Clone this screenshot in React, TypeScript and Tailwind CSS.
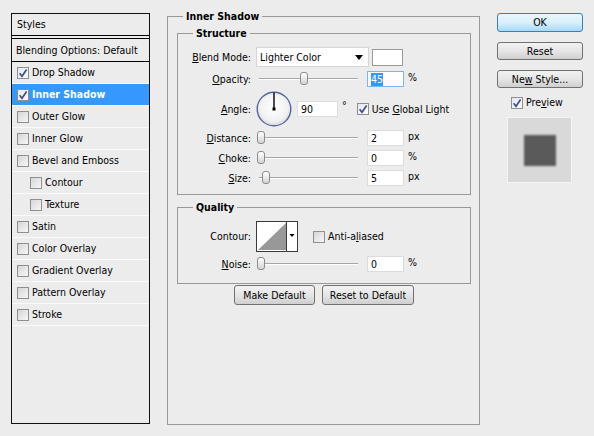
import React from "react";

const ui =
  "font-['DejaVu_Sans_Condensed','DejaVu_Sans',sans-serif] text-[10.5px] leading-[13px] text-black";

function CheckBox({ on }: { on?: boolean }) {
  return (
    <span
      className={`flex h-[12px] w-[12px] shrink-0 items-center justify-center border border-[#8f8f8f] ${
        on ? "bg-gradient-to-br from-[#e4e8f4] to-[#fdfdfd]" : "bg-gradient-to-br from-[#d6d6d6] to-[#f7f7f7]"
      }`}
    >
      {on && (
        <svg width="10" height="10" viewBox="0 0 10 10">
          <path d="M1.6 5.2 L4 8.2 L8.6 1.4" fill="none" stroke="#3f4f91" strokeWidth="1.7" />
        </svg>
      )}
    </span>
  );
}

function Slider({ thumb }: { thumb: string }) {
  return (
    <div className="relative h-[14px] w-[104px] shrink-0">
      <div className="absolute left-[3px] right-[2px] top-[6px] h-[2px] border-t border-[#a6a6a6] bg-white" />
      <span
        className={`absolute top-0 h-[13px] w-[8px] rounded-[3px] border border-[#8b8b8b] bg-gradient-to-b from-white to-[#d4d4d4] ${thumb}`}
      />
    </div>
  );
}

function Field({ value, selected, width = "w-[37px]" }: { value: string; selected?: boolean; width?: string }) {
  return (
    <span
      className={`flex h-[16px] shrink-0 items-center border bg-white pl-[3px] ${width} ${
        selected ? "border-[#7eb4ea]" : "border-[#dcdcdc]"
      }`}
    >
      {selected ? <span className="bg-[#3399ff] text-white">{value}</span> : value}
    </span>
  );
}

function Label({ children }: { children: React.ReactNode }) {
  return <span className="w-[78px] shrink-0 pr-[5px] text-right">{children}</span>;
}

function SliderRow({
  label,
  thumb,
  value,
  unit,
  selected,
  className,
}: {
  label: React.ReactNode;
  thumb: string;
  value: string;
  unit: string;
  selected?: boolean;
  className: string;
}) {
  return (
    <div className={`flex h-[16px] items-center ${className}`}>
      <Label>{label}</Label>
      <Slider thumb={thumb} />
      <span className="ml-[7px]">
        <Field value={value} selected={selected} />
      </span>
      <span className="ml-[4px] -mt-[3px]">{unit}</span>
    </div>
  );
}

function Button({ children, width, primary }: { children: React.ReactNode; width: string; primary?: boolean }) {
  return (
    <div
      className={`flex items-center justify-center rounded-[3px] border ${width} ${
        primary
          ? "border-[#3c7fb1] bg-gradient-to-b from-[#eaf6fd] via-[#d9f0fc] to-[#a7d9f5]"
          : "border-[#707070] bg-gradient-to-b from-[#f2f2f2] via-[#e6e6e6] to-[#cfcfcf]"
      }`}
    >
      {children}
    </div>
  );
}

const styleItems: { name: string; on?: boolean; selected?: boolean; indent?: boolean }[] = [
  { name: "Drop Shadow", on: true },
  { name: "Inner Shadow", on: true, selected: true },
  { name: "Outer Glow" },
  { name: "Inner Glow" },
  { name: "Bevel and Emboss" },
  { name: "Contour", indent: true },
  { name: "Texture", indent: true },
  { name: "Satin" },
  { name: "Color Overlay" },
  { name: "Gradient Overlay" },
  { name: "Pattern Overlay" },
  { name: "Stroke" },
];

export default function App() {
  return (
    <div className={`flex h-[436px] w-[594px] items-start bg-[#ececec] pl-[11px] pt-[10px] ${ui}`}>
      {/* styles list */}
      <div className="mt-[3px] flex h-[411px] w-[139px] shrink-0 flex-col border border-[#111]">
        <div className="flex h-[22px] items-center border-b border-black pl-[5px]">Styles</div>
        <div className="mt-[2px] flex h-[24px] items-center border-y border-black pl-[4px]">
          Blending Options: Default
        </div>
        {styleItems.map((it) => (
          <div
            key={it.name}
            className={`flex h-[22px] items-center gap-[3px] border-b border-[#fafafa] ${
              it.indent ? "pl-[18px]" : "pl-[5px]"
            } ${it.selected ? "bg-[#3399ff] font-bold text-white" : ""}`}
          >
            <CheckBox on={it.on} />
            <span>{it.name}</span>
          </div>
        ))}
      </div>

      {/* settings */}
      <fieldset className="ml-[17px] h-[415px] w-[313px] shrink-0 border border-[#999] pl-[9px] pr-[8px]">
        <legend className="ml-[6px] px-[3px] font-bold">Inner Shadow</legend>

        <fieldset className="mt-[4px] border border-[#999] pb-[8px]">
          <legend className="ml-[15px] px-[3px] font-bold">Structure</legend>

          <div className="mt-[7px] flex h-[20px] items-center">
            <Label>
              <u>B</u>lend Mode:
            </Label>
            <div className="flex h-[20px] w-[113px] items-center justify-between border border-[#d6d6d6] bg-white pl-[3px] pr-[5px]">
              <span>Lighter Color</span>
              <svg width="8" height="5" viewBox="0 0 8 5">
                <path d="M0 0 H8 L4 5 Z" fill="#000" />
              </svg>
            </div>
            <span className="ml-[3px] h-[17px] w-[31px] border border-[#9a9a9a] bg-white" />
          </div>

          <SliderRow
            className="mt-[4px]"
            label={
              <>
                <u>O</u>pacity:
              </>
            }
            thumb="left-[44px]"
            value="45"
            unit="%"
            selected
          />

          <div className="mt-[4px] flex h-[36px] items-center">
            <Label>
              <u>A</u>ngle:
            </Label>
            <svg width="36" height="36" viewBox="0 0 36 36" className="shrink-0">
              <defs>
                <radialGradient id="dial" cx="50%" cy="45%" r="55%">
                  <stop offset="0%" stopColor="#ffffff" />
                  <stop offset="75%" stopColor="#f1f1f1" />
                  <stop offset="100%" stopColor="#d8d8d8" />
                </radialGradient>
              </defs>
              <circle cx="18" cy="18" r="16.8" fill="url(#dial)" stroke="#55669c" strokeWidth="1.4" />
              <line x1="18" y1="18" x2="18" y2="1.5" stroke="#000" strokeWidth="1.4" />
              <rect x="16.5" y="16.5" width="3" height="3" fill="#000" />
            </svg>
            <span className="ml-[5px]">
              <Field value="90" width="w-[41px]" />
            </span>
            <span className="ml-[4px] -mt-[8px]">°</span>
            <span className="ml-[10px]">
              <CheckBox on />
            </span>
            <span className="ml-[3px]">
              Use <u>G</u>lobal Light
            </span>
          </div>

          <SliderRow
            className="mt-[3px]"
            label={
              <>
                <u>D</u>istance:
              </>
            }
            thumb="left-[1px]"
            value="2"
            unit="px"
          />
          <SliderRow
            className="mt-[4px]"
            label={
              <>
                <u>C</u>hoke:
              </>
            }
            thumb="left-[1px]"
            value="0"
            unit="%"
          />
          <SliderRow
            className="mt-[4px]"
            label={
              <>
                <u>S</u>ize:
              </>
            }
            thumb="left-[6px]"
            value="5"
            unit="px"
          />
        </fieldset>

        <fieldset className="mt-[6px] border border-[#999] pb-[11px]">
          <legend className="ml-[15px] px-[3px] font-bold">Quality</legend>

          <div className="mt-[7px] flex h-[31px] items-center">
            <Label>Contour:</Label>
            <svg width="42" height="31" viewBox="0 0 42 31" className="shrink-0">
              <rect x="0.5" y="0.5" width="41" height="30" fill="#fff" stroke="#3a3a3a" />
              <polygon points="2,29 30,2 30,29" fill="#989898" />
              <line x1="30.5" y1="1" x2="30.5" y2="30" stroke="#3a3a3a" />
              <path d="M33.5 13 H38.5 L36 16 Z" fill="#000" />
            </svg>
            <span className="ml-[15px]">
              <CheckBox />
            </span>
            <span className="ml-[3px]">
              Anti-a<u>l</u>iased
            </span>
          </div>

          <SliderRow
            className="mt-[4px]"
            label={
              <>
                <u>N</u>oise:
              </>
            }
            thumb="left-[1px]"
            value="0"
            unit="%"
          />
        </fieldset>

        <div className="mt-[1px] flex justify-center gap-[7px]">
          <Button width="h-[20px] w-[81px]">Make Default</Button>
          <Button width="h-[20px] w-[92px]">Reset to Default</Button>
        </div>
      </fieldset>

      {/* buttons */}
      <div className="ml-[17px] mt-[3px] flex w-[86px] shrink-0 flex-col">
        <Button width="h-[19px] w-[86px]" primary>
          OK
        </Button>
        <div className="mt-[10px]">
          <Button width="h-[18px] w-[86px]">Reset</Button>
        </div>
        <div className="mt-[10px]">
          <Button width="h-[18px] w-[86px]">
            <span>
              Ne<u>w</u> Style...
            </span>
          </Button>
        </div>
        <div className="mt-[8px] flex h-[13px] items-center gap-[3px] pl-[14px]">
          <CheckBox on />
          <span>
            Pre<u>v</u>iew
          </span>
        </div>
        <div className="ml-[10px] mt-[8px] flex h-[66px] w-[65px] items-center justify-center border border-[#f4f4f4] bg-[#d9d9d9]">
          <div className="h-[31px] w-[32px] bg-[#5a5a5a] blur-[1px]" />
        </div>
      </div>
    </div>
  );
}
